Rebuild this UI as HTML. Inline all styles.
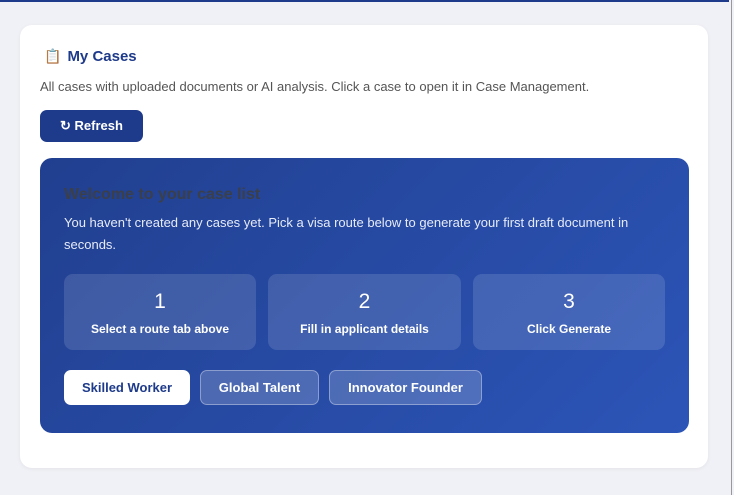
<!DOCTYPE html>
<html><head><style>
*{margin:0;padding:0;box-sizing:border-box}
body{width:734px;height:495px;background:#f0f1f6;font-family:"Liberation Sans",sans-serif;position:relative;overflow:hidden}
.top{position:absolute;left:0;top:0;width:729px;height:2px;background:#1e3a8a}
.rb{position:absolute;right:0;top:0;width:3px;height:495px;background:#f0f1f6;border-left:1px solid #999}
.card{position:absolute;left:20px;top:25px;width:688px;height:443px;background:#fff;border-radius:12px;box-shadow:0 1px 4px rgba(0,0,0,.06)}
h2{position:absolute;left:44px;top:48px;font-size:15px;font-weight:bold;color:#1e3a8a}
.desc{position:absolute;left:40px;top:79px;font-size:13px;color:#555}
.ref{position:absolute;left:40px;top:110px;width:103px;height:32px;background:#1e3a8a;border-radius:7px;color:#fff;font-weight:bold;font-size:13px;text-align:center;line-height:32px}
.panel{position:absolute;left:40px;top:158px;width:649px;height:275px;border-radius:12px;background:linear-gradient(135deg,#213f8f,#2c55b8)}
.panel h3{position:absolute;left:24px;top:28px;font-size:16px;color:#3a3f4a;font-weight:bold}
.panel p{position:absolute;left:24px;top:54px;width:600px;font-size:13px;line-height:22px;color:#e6ebf7}
.step{position:absolute;top:116px;width:192px;height:76px;border-radius:9px;background:rgba(255,255,255,.13);color:#fff;text-align:center}
.step b{display:block;font-weight:normal;font-size:21px;margin-top:16px}
.step span{display:block;font-size:12px;font-weight:bold;margin-top:8px}
.btn{position:absolute;top:212px;height:35px;border-radius:7px;font-size:13px;font-weight:bold;text-align:center;line-height:34px;color:#fff;background:rgba(255,255,255,.18);border:1px solid rgba(255,255,255,.35)}
</style></head><body>
<div class="top"></div>
<div class="card"></div>
<h2><span style="font-size:14px;margin-right:6px">📋</span>My Cases</h2>
<div class="desc">All cases with uploaded documents or AI analysis. Click a case to open it in Case Management.</div>
<div class="ref">↻ Refresh</div>
<div class="panel">
<h3>Welcome to your case list</h3>
<p>You haven't created any cases yet. Pick a visa route below to generate your first draft document in seconds.</p>
<div class="step" style="left:24px"><b>1</b><span>Select a route tab above</span></div>
<div class="step" style="left:228px;width:193px"><b>2</b><span>Fill in applicant details</span></div>
<div class="step" style="left:433px"><b>3</b><span>Click Generate</span></div>
<div class="btn" style="left:24px;width:126px;background:#fff;color:#1e3a8a;border-color:#fff">Skilled Worker</div>
<div class="btn" style="left:160px;width:119px">Global Talent</div>
<div class="btn" style="left:289px;width:153px">Innovator Founder</div>
</div>
<div class="rb"></div>
</body></html>
